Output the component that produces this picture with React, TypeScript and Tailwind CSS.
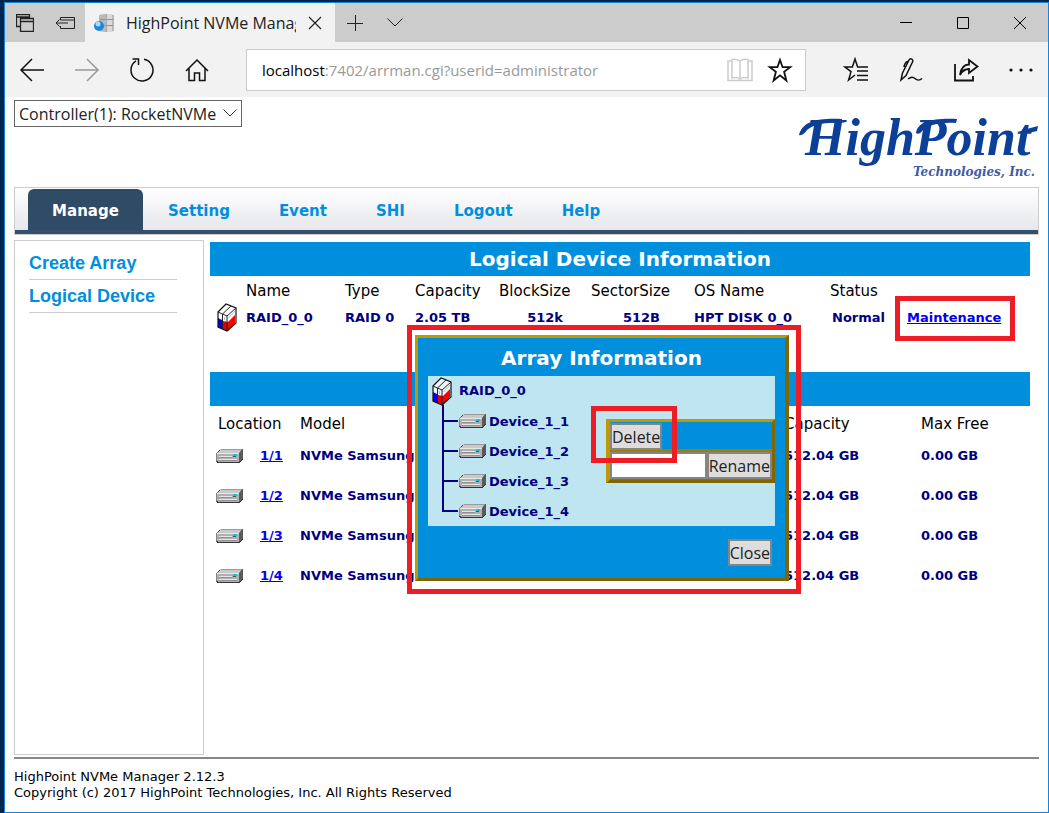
import type { ReactNode } from "react";

const navItems = ["Setting", "Event", "SHI", "Logout", "Help"];
const disks = ["1/1", "1/2", "1/3", "1/4"];
const devices = ["Device_1_1", "Device_1_2", "Device_1_3", "Device_1_4"];

function DiskIcon() {
  return (
    <svg width="28" height="16" viewBox="0 0 28 16" className="block shrink-0" aria-hidden="true">
      <path d="M4 1H26L23 5H1Z" fill="#c9c9c9" />
      <path d="M1 5H23V14H1Z" fill="#b0b0b0" />
      <path d="M23 5L26 1H27V11L24 14H23Z" fill="#5a5a5a" />
      <path d="M5 1.5H26" stroke="#999" />
      <path d="M1 5.5H23" stroke="#e8e8e8" />
      <path d="M3 8.500H16M3 11.500H21" stroke="#e6e6e6" />
      <path d="M3 9.500H16M3 12.500H21" stroke="#909090" />
      <path d="M1 14.500H24" stroke="#333" />
      <path d="M24 14L27 11" stroke="#333" />
      <path d="M0.500 5V14" stroke="#888" />
      <path d="M17 6H21V8H17Z" fill="#18c4d8" />
      <path d="M17 8H20V9H17Z" fill="#0a6d86" />
      <path d="M1.500 4.500L4 2M0 13.500H2" stroke="#802060" />
    </svg>
  );
}

function RaidIcon() {
  return (
    <svg width="20" height="29" viewBox="0 0 20 29" className="block shrink-0" aria-hidden="true">
      <path d="M1 9L9 1L19 5V20L10 28L1 24Z" fill="#fff" fillOpacity="0.7" />
      <path d="M1 15L5 17V26L1 24Z" fill="#0000f0" />
      <path d="M6 18L11 19V28L6 26Z" fill="#e00000" />
      <path d="M11 19L18 12V20L11 28Z" fill="#ff0000" />
      <path d="M1 9L9 1L19 5V20L10 28L1 24Z" fill="none" stroke="#111" strokeWidth="1.2" />
      <path d="M1 9L10 13L19 5M10 13V28M5.500 11V26M5.500 11L14 3" fill="none" stroke="#222" />
      <path d="M11.500 15L18 8M7.500 14V17" stroke="#bbb" />
    </svg>
  );
}

function Logo() {
  return (
    <svg width="240" height="68" viewBox="0 0 240 68" role="img" aria-label="HighPoint Technologies, Inc.">
      <text x="6" y="42" fontSize="52" fontWeight="bold" fontStyle="italic" fill="#0b3f98" fontFamily="'Liberation Serif', serif">
        HighPoint
      </text>
      <path d="M0 22C4 8 18 5 43 6L42 10C24 9 14 12 8 17C6 20 3 23 0 22Z" fill="#0b3f98" />
      <path d="M117 20C119 8 134 5 158 6L157 10C140 9 130 12 124 17C122 20 119 22 117 20Z" fill="#0b3f98" />
      <path d="M224 17L239 13L238 18L225 21Z" fill="#0b3f98" />
      <text x="114" y="63" fontSize="12" fontWeight="bold" fontStyle="italic" fill="#3c5ca6" fontFamily="'DejaVu Serif', serif">
        Technologies, Inc.
      </text>
    </svg>
  );
}

function ToolButton({ label, children }: { label: string; children: ReactNode }) {
  return (
    <button aria-label={label} className="flex h-8 w-8 items-center justify-center">
      <svg width="26" height="26" viewBox="0 0 26 26" fill="none" stroke="#111" strokeWidth="1.5" aria-hidden="true">
        {children}
      </svg>
    </button>
  );
}

function TabBar() {
  return (
    <div className="flex h-[39px] bg-[#ccc] text-[#222]">
      <button aria-label="Tabs you've set aside" className="flex w-10 items-center justify-center">
        <svg width="18" height="18" viewBox="0 0 18 18" fill="none" stroke="#222" aria-hidden="true">
          <path d="M4.5 12.5H0.5V0.5H13.5V4.5M0.5 3H13.5M4.5 4.5H17.5V17.5H4.5ZM4.5 7.5H17.5" strokeWidth="1.3" />
        </svg>
      </button>
      <button aria-label="Set these tabs aside" className="flex w-10 items-center justify-center">
        <svg width="20" height="14" viewBox="0 0 20 14" fill="none" stroke="#222" aria-hidden="true">
          <path d="M5.5 4V1.5H19.5V12.5H5.5V10M5.5 4H19.5M1 7H13M4.5 3.5L1 7L4.5 10.5" />
        </svg>
      </button>
      <div className="flex w-[250px] items-center bg-[#f2f2f2] pl-2">
        <svg width="22" height="20" viewBox="0 0 22 20" aria-hidden="true">
          <path d="M6 2Q13 0 21 2V18Q13 20 6 18Z" fill="#b9b9b9" />
          <path d="M13 1H19V19H13Z" fill="#dadada" />
          <path d="M7 6.500H20M7 12.500H20" stroke="#929292" />
          <path d="M13.500 1V19" stroke="#a8a8a8" />
          <circle cx="6" cy="13" r="5" fill="#1d87dc" />
          <circle cx="5" cy="11" r="2.500" fill="#a9dcfa" />
        </svg>
        <span className="ml-[11px] w-[170px] overflow-hidden text-base whitespace-nowrap">HighPoint NVMe Manager</span>
        <button aria-label="Close tab" className="ml-3">
          <svg width="14" height="14" viewBox="0 0 14 14" stroke="#222" strokeWidth="1.2" aria-hidden="true">
            <path d="M1 1L13 13M13 1L1 13" />
          </svg>
        </button>
      </div>
      <button aria-label="New tab" className="flex w-10 items-center justify-center">
        <svg width="16" height="16" viewBox="0 0 16 16" stroke="#222" aria-hidden="true">
          <path d="M8.5 0V16M0 8.5H16" />
        </svg>
      </button>
      <button aria-label="Show tab previews" className="flex w-10 items-center justify-center">
        <svg width="16" height="9" viewBox="0 0 16 9" fill="none" stroke="#222" aria-hidden="true">
          <path d="M0.5 0.5L8 8L15.5 0.5" />
        </svg>
      </button>
      <div className="ml-auto flex">
        <button aria-label="Minimize" className="flex w-[57px] items-center justify-center">
          <svg width="12" height="12" viewBox="0 0 12 12" stroke="#000" aria-hidden="true">
            <path d="M0 5.5H12" />
          </svg>
        </button>
        <button aria-label="Maximize" className="flex w-[57px] items-center justify-center">
          <svg width="12" height="12" viewBox="0 0 12 12" fill="none" stroke="#000" aria-hidden="true">
            <path d="M0.5 0.5H11.5V11.5H0.5Z" />
          </svg>
        </button>
        <button aria-label="Close" className="flex w-[57px] items-center justify-center">
          <svg width="12" height="12" viewBox="0 0 12 12" stroke="#000" aria-hidden="true">
            <path d="M0 0L12 12M12 0L0 12" />
          </svg>
        </button>
      </div>
    </div>
  );
}

function AddressBar() {
  return (
    <div className="flex h-[55px] items-center bg-[#f2f2f2] pr-[11px] pl-[11px]">
      <div className="flex w-[230px] gap-[23px]">
        <ToolButton label="Back">
          <path d="M25 13H2M13 2L2 13L13 24" />
        </ToolButton>
        <ToolButton label="Forward">
          <path d="M1 13H24M13 2L24 13L13 24" stroke="#999" />
        </ToolButton>
        <ToolButton label="Refresh">
          <path d="M15 2.2A11 11 0 1 1 7 3.8M3.5 2H9.5V8" />
        </ToolButton>
        <ToolButton label="Home">
          <path d="M2 14L13 3L24 14M5 11V23.5H10.5V16H15.5V23.5H21V11" />
        </ToolButton>
      </div>
      <div className="flex h-[42px] min-w-0 flex-1 items-center border border-[#ccc] bg-white pr-3 pl-[15px]">
        <div className="flex-1 truncate pt-0.5 text-[15px] text-[#999]">
          <span className="text-black">localhost</span>:7402/arrman.cgi?userid=administrator
        </div>
        <button aria-label="Reading view" className="mr-[14px]">
          <svg width="26" height="24" viewBox="0 0 26 24" fill="none" stroke="#ccc" strokeWidth="1.5" aria-hidden="true">
            <path d="M13 3C10 1 7 1 5 1.5V20C8 19 11 19.5 13 21C15 19.5 18 19 21 20V1.5C18 1 15 1 13 3V21M5 3H1V22.5H25V3H21" />
          </svg>
        </button>
        <button aria-label="Add to favorites">
          <svg width="26" height="26" viewBox="0 0 26 26" fill="none" stroke="#111" strokeWidth="1.8" aria-hidden="true">
            <path d="M13 3L15.6 10.2H23.2L17.1 14.8L19.4 23.5L13 18.4L6.6 23.5L8.9 14.8L2.8 10.2H10.4Z" />
          </svg>
        </button>
      </div>
      <div className="ml-[34px] flex gap-[23px]">
        <ToolButton label="Hub">
          <path d="M25 10H14.6L12 2L9.4 10H2L8 14.6L5.6 23L12 18M14 14H25M14 18.5H25M14 23H25" />
        </ToolButton>
        <ToolButton label="Make a Web Note">
          <path d="M3 23L4.500 16L11 3C12 0.500 16 2.500 14.500 5L8 18.500L3 23ZM10 4.500C8 4 6 8 6 10M8 9L6 13M10 22C13 19.500 15 19.500 17 21.500C19 23.500 22 23.500 24 21.500" />
        </ToolButton>
        <ToolButton label="Share">
          <path d="M2 7V23.500H20V19M7 18C8 11 11 7.500 16 7.500V3L24.500 9.500L16 16V12C12 12 9 14 7 18Z" strokeWidth="1.800" />
        </ToolButton>
        <ToolButton label="More">
          <g fill="#111" stroke="none">
            <circle cx="3" cy="13" r="1.600" />
            <circle cx="13" cy="13" r="1.600" />
            <circle cx="23" cy="13" r="1.600" />
          </g>
        </ToolButton>
      </div>
    </div>
  );
}

function ArrayDialog() {
  const button = "border-2 border-[#858585] bg-[#ddd] pt-px text-base leading-[22px] text-[#222]";
  return (
    <div role="dialog" aria-label="Array Information" className="absolute top-[85px] left-[203px] w-[394px] border-[5px] border-[#ee1c25] pt-[5px] pr-[7px] pb-2 pl-[3px]">
      <div className="border-3 border-t-[#c09800] border-r-4 border-r-[#806600] border-b-[#806600] border-l-[#c09800] bg-[#008fdd] px-[10px] pb-3">
        <h2 className="pt-[5px] pb-[3px] text-center text-xl leading-[30px] font-bold text-white">Array Information</h2>
        <div className="relative h-[150px] bg-[#bfe6f0] pl-1 text-[13px] font-bold text-[#000080]">
          <div className="flex h-[30px] items-center gap-[7px]">
            <RaidIcon />
            RAID_0_0
          </div>
          <ul className="relative ml-[10px]">
            <li aria-hidden="true" className="absolute -top-px left-0 h-[107px] w-0.5 bg-[#000080]" />
            {devices.map((device) => (
              <li key={device} className="flex h-[30px] items-center">
                <span className="mr-px h-0.5 w-4 bg-[#000080]" />
                <DiskIcon />
                <span className="ml-0.5 pt-0.5">{device}</span>
              </li>
            ))}
          </ul>
          <div className="absolute top-[43px] right-0 w-[169px] border-3 border-l-4 border-t-[#c09800] border-r-[#806600] border-b-[#806600] border-l-[#c09800] bg-[#008fdd] font-['Open_Sans',sans-serif] font-normal">
            <div className="flex h-[30px] items-start border-b-3 border-[#a07f00] pt-px">
              <button className={button}>Delete</button>
            </div>
            <div className="flex h-[28px] items-start">
              <input aria-label="Array name" className="h-[27px] min-w-0 flex-1 border-2 border-[#858585] bg-white text-base text-black" />
              <button className={button}>Rename</button>
            </div>
          </div>
          <span className="pointer-events-none absolute top-[30px] right-[98px] h-[57px] w-[86px] border-[5px] border-[#ee1c25]" />
        </div>
        <div className="mt-[13px] flex justify-end pr-[3px] font-['Open_Sans',sans-serif]">
          <button className={button}>Close</button>
        </div>
      </div>
    </div>
  );
}

function LogicalTable() {
  return (
    <table className="w-full table-fixed text-left">
      <colgroup>
        <col className="w-9" />
        <col className="w-[99px]" />
        <col className="w-[70px]" />
        <col className="w-[84px]" />
        <col className="w-[92px]" />
        <col className="w-[103px]" />
        <col className="w-[136px]" />
        <col className="w-[77px]" />
        <col />
      </colgroup>
      <thead className="text-[15px]">
        <tr className="h-[27px] whitespace-nowrap [&>th]:pt-1 [&>th]:font-normal">
          <th />
          <th>Name</th>
          <th>Type</th>
          <th>Capacity</th>
          <th>BlockSize</th>
          <th>SectorSize</th>
          <th>OS Name</th>
          <th>Status</th>
          <th />
        </tr>
      </thead>
      <tbody className="text-[13px] font-bold text-[#000080]">
        <tr className="h-[29px] whitespace-nowrap">
          <td className="pl-[7px]">
            <RaidIcon />
          </td>
          <td>RAID_0_0</td>
          <td>RAID 0</td>
          <td>2.05 TB</td>
          <td className="pr-7 text-right">512k</td>
          <td className="pr-[34px] text-right">512B</td>
          <td>HPT DISK 0_0</td>
          <td className="pl-0.5">Normal</td>
          <td>
            <span className="relative inline-block">
              <a href="#maintenance" className="text-[#0000ee] underline">
                Maintenance
              </a>
              <span className="pointer-events-none absolute -top-3 -right-[14px] -bottom-[14px] -left-3 border-[5px] border-[#ee1c25]" />
            </span>
          </td>
        </tr>
      </tbody>
    </table>
  );
}

function PhysicalTable() {
  return (
    <table className="w-full table-fixed text-left">
      <colgroup>
        <col className="w-[50px]" />
        <col className="w-10" />
        <col />
        <col className="w-[137px]" />
        <col className="w-[109px]" />
      </colgroup>
      <thead className="text-[15px]">
        <tr className="h-[34px] whitespace-nowrap [&>th]:pt-0.5 [&>th]:font-normal">
          <th colSpan={2} className="pl-2">
            Location
          </th>
          <th>Model</th>
          <th>Capacity</th>
          <th>Max Free</th>
        </tr>
      </thead>
      <tbody className="text-[13px] font-bold text-[#000080]">
        {disks.map((disk) => (
          <tr key={disk} className="h-10 whitespace-nowrap [&>td]:pb-2">
            <td className="pl-1.5">
              <DiskIcon />
            </td>
            <td>
              <a href={`#disk-${disk}`} className="text-[#0000ee] underline">
                {disk}
              </a>
            </td>
            <td>NVMe Samsung</td>
            <td>512.04 GB</td>
            <td>0.00 GB</td>
          </tr>
        ))}
      </tbody>
    </table>
  );
}

export default function App() {
  return (
    <div className="flex min-h-screen flex-col bg-[#00264f] pt-0.5 pl-1 font-['Open_Sans',sans-serif]">
      <div className="flex flex-1 flex-col border border-[#1883d7] bg-white">
        <TabBar />
        <AddressBar />
        <main className="flex flex-1 flex-col pt-[3px] pr-[9px] pl-[9px] font-['DejaVu_Sans',sans-serif]">
          <div className="flex h-[87px] items-start justify-between">
            <div className="relative font-['Open_Sans',sans-serif]">
              <select aria-label="Controller" className="block h-[27px] w-[228px] appearance-none border border-[#666] bg-white pl-1 text-base leading-none text-[#222]">
                <option>Controller(1): RocketNVMe</option>
              </select>
              <svg width="14" height="8" viewBox="0 0 14 8" fill="none" stroke="#333" className="pointer-events-none absolute top-[9px] right-[5px]" aria-hidden="true">
                <path d="M0.500 0.500L7 7L13.500 0.500" />
              </svg>
            </div>
            <div className="pt-[13px]">
              <Logo />
            </div>
          </div>
          <nav className="border border-[#ccc]">
            <div className="flex h-[46px] items-end border-b-4 border-[#34506c] bg-linear-to-b from-white to-[#e6e7eb] pl-[13px] text-[15px] font-bold text-[#008fdd]">
              <a href="#manage" className="mr-[25px] flex h-[41px] w-[115px] items-center justify-center rounded-t-md bg-[#304b66] pt-1 text-white">
                Manage
              </a>
              <div className="flex h-[41px] items-center gap-[49px] pt-1">
                {navItems.map((item) => (
                  <a key={item} href={`#${item.toLowerCase()}`}>
                    {item}
                  </a>
                ))}
              </div>
            </div>
          </nav>
          <div className="mt-[5px] flex">
            <aside className="min-h-[515px] w-[190px] shrink-0 border border-[#ccc] px-[14px] pt-[6px] font-['Liberation_Sans',sans-serif] text-lg font-bold text-[#008fdd]">
              <a href="#create" className="block w-[148px] border-b border-[#ccc] leading-8">
                Create Array
              </a>
              <a href="#logical" className="block w-[148px] border-b border-[#ccc] leading-8">
                Logical Device
              </a>
            </aside>
            <section className="relative min-w-0 flex-1 pt-[2px] pr-[9px] pl-1.5">
              <h1 className="bg-[#008fdd] text-center text-xl leading-[34px] font-bold text-white">Logical Device Information</h1>
              <LogicalTable />
              <div className="mt-10 h-[34px] bg-[#008fdd]" />
              <PhysicalTable />
              <ArrayDialog />
            </section>
          </div>
          <footer className="mt-0.5 border-t-2 border-[#888] pt-[10px] text-[13px] leading-4">
            <p>HighPoint NVMe Manager 2.12.3</p>
            <p>Copyright (c) 2017 HighPoint Technologies, Inc. All Rights Reserved</p>
          </footer>
        </main>
      </div>
    </div>
  );
}
